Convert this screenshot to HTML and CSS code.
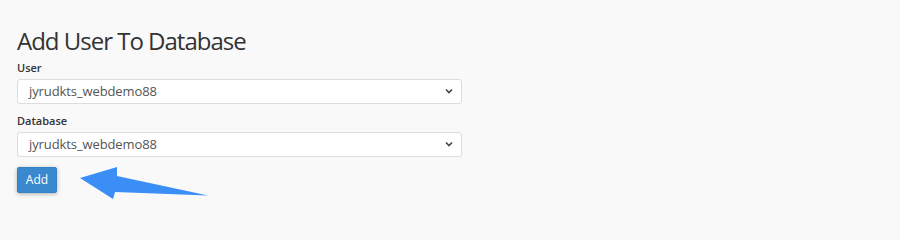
FILE: index.html
```html
<!DOCTYPE html>
<html>
<head>
<meta charset="utf-8">
<link rel="stylesheet" href="styles.css">
</head>
<body>
<div class="page">
  <h1 class="title">Add User To Database</h1>
  <div class="field">
    <label class="label">User</label>
    <div class="select">
      <span class="select-text">jyrudkts_webdemo88</span>
      <svg class="chev" width="8" height="6" viewBox="0 0 8 6"><path d="M1 1.5 L4 4.5 L7 1.5" fill="none" stroke="#444" stroke-width="1.6"/></svg>
    </div>
  </div>
  <div class="field">
    <label class="label">Database</label>
    <div class="select">
      <span class="select-text">jyrudkts_webdemo88</span>
      <svg class="chev" width="8" height="6" viewBox="0 0 8 6"><path d="M1 1.5 L4 4.5 L7 1.5" fill="none" stroke="#444" stroke-width="1.6"/></svg>
    </div>
  </div>
  <button class="btn">Add</button>
  <svg class="arrow" width="900" height="215" viewBox="0 0 900 215"><polygon points="80,178 117,167 117,176 208,195.5 115,192 113,199" fill="#3a8ef6"/></svg>
</div>
</body>
</html>
```
FILE: styles.css
```css
html, body { margin: 0; padding: 0; }
body {
  background: #f9f9f9;
  font-family: "Open Sans", "Liberation Sans", sans-serif;
  color: #333;
  width: 900px;
  height: 215px;
  overflow: hidden;
}
.page {
  position: relative;
  padding: 27px 0 0 17px;
  height: 215px;
  box-sizing: border-box;
}
.title {
  margin: 0 0 3px 0;
  font-size: 24px;
  font-weight: 400;
  line-height: 28.8px;
  letter-spacing: -1px;
  color: #333;
}
.field { margin-bottom: 8px; }
.label {
  display: block;
  font-size: 11px;
  font-weight: 600;
  line-height: 17px;
  margin-bottom: 3px;
  color: #333;
}
.select {
  width: 445px;
  height: 25px;
  box-sizing: border-box;
  background: #fff;
  border: 1px solid #ddd;
  border-radius: 3px;
  display: flex;
  align-items: center;
  justify-content: space-between;
  padding: 0 8px 0 11px;
}
.select-text { font-size: 13px; color: #555; letter-spacing: -0.1px; }
.chev { display: block; }
.btn {
  margin-top: 2px;
  width: 40px;
  height: 26px;
  background: #3a89cf;
  color: #fff;
  border: 1px solid #3682c6;
  border-radius: 2px;
  font-family: "Open Sans", "Liberation Sans", sans-serif;
  font-size: 12px;
  padding: 0;
  box-shadow: 0 1px 4px rgba(0,0,0,0.3);
}
.arrow {
  position: absolute;
  left: 0;
  top: 0;
  pointer-events: none;
}
```
